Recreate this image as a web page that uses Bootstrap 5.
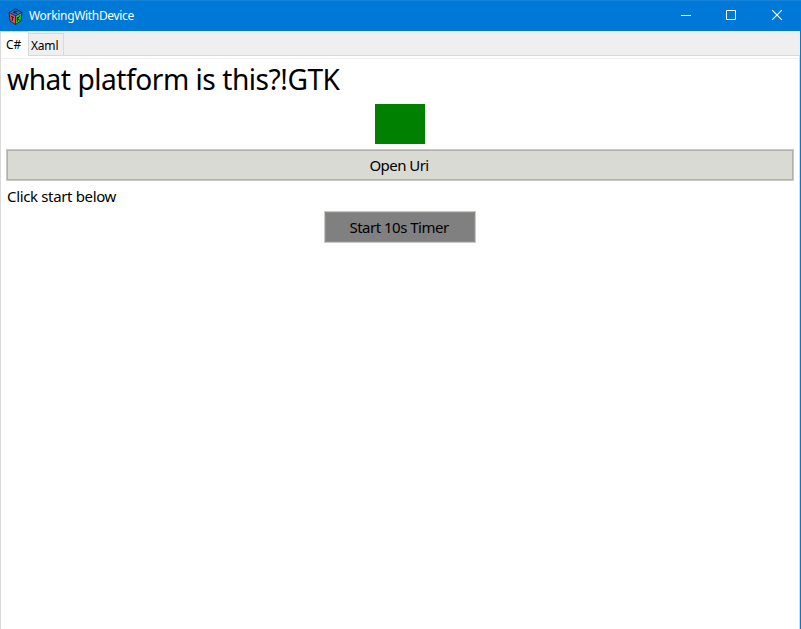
<!DOCTYPE html>
<html lang="en">
<head>
<meta charset="utf-8">
<title>WorkingWithDevice</title>
<meta name="viewport" content="width=device-width, initial-scale=1">
<link href="https://cdn.jsdelivr.net/npm/bootstrap@5.3.0/dist/css/bootstrap.min.css" rel="stylesheet">
<style>
body{font-family:"Segoe UI","Noto Sans","Open Sans",sans-serif;color:#000;line-height:1;font-size:15px}
.win{height:100vh;border-right:1px solid #0078d7}
.titlebar{height:31px;background:#0078d7;border-top:1px solid #1683da;margin-right:-1px;padding-left:8px;font-size:12px}
.app-name{margin-left:6px;letter-spacing:-.32px}
.ctl{width:46px;height:30px}
.client{border:solid #d9d9d9;border-width:0 1px;min-height:0}
.tabs{height:25px;background:#efefef;border-bottom:1px solid #d9d9d9;margin:0 -1px;font-size:12px}
.tabs .nav-link{color:#000;border:1px solid #d9d9d9;border-radius:0;padding:0;line-height:23px}
.tabs .nav-link.active{width:28px;height:25px;background:#fff;border-bottom:0;border-right:0;padding-left:5px;line-height:26px}
.tabs .tab-idle{width:36px;height:23px;margin-top:2px;padding-left:2px;letter-spacing:-.2px}
.rule{height:1px;background:#efefef;margin:2px 1px 0}
.page{padding:0 5px 0 5px}
.headline{font-size:29.5px;line-height:40px;height:45px;margin:0;padding:0 0 0 1px;font-weight:400;letter-spacing:-.5px}
.headline span{display:inline-block;transform:scaleX(.954);transform-origin:0 0}
.swatch{width:50px;height:40px;background:green;margin-bottom:5px}
.gtk{border:1px solid #c8c8c4;border-radius:0;height:32px;padding:0 2px 0 0;font-size:15px;color:#000;background:#dadad5;box-shadow:inset 0 0 0 1px #b1b2ac;line-height:31px;letter-spacing:-.55px}
.gtk:hover{background:#dadad5;color:#000;border-color:#c8c8c4}
.timer,.timer:hover{width:152px;background:#808080;box-shadow:inset 0 0 0 1px #8e8e8a;letter-spacing:-.5px}
.status{line-height:30px;height:30px;padding-left:1px;letter-spacing:-.35px}
</style>
<script src="https://cdn.jsdelivr.net/npm/bootstrap@5.3.0/dist/js/bootstrap.bundle.min.js"></script>
</head>
<body class="overflow-hidden">
<div class="win d-flex flex-column bg-white">
  <header class="titlebar d-flex align-items-center text-white flex-shrink-0">
    <svg width="15" height="17" viewBox="0 0 15 17">
      <path d="M1 4.5 7.5 7.8V16.5L2 13z" fill="#f04856"/>
      <path d="M14 4.5 7.5 7.8V16.5L13 13z" fill="#2cc044"/>
      <path d="M1 4.5 7.5 .8 14 4.5 7.5 7.8z" fill="#316bc8"/>
      <path d="M1 4.5 7.5 7.8 14 4.5M7.5 7.8V16.5M1 4.5 7.5 .8 14 4.5 13 13 7.5 16.5 2 13z" fill="none" stroke="#17202c" stroke-width=".8"/>
      <path d="M9.5 3.4Q7 2.4 5.5 4.4L9 5.4M2.7 8 6 9.6M4.3 9V13M9.4 9V13.6M12 7.5 9.7 10.7 11.8 12.5" fill="none" stroke="#111" stroke-width=".9"/>
    </svg>
    <span class="app-name">WorkingWithDevice</span>
    <div class="d-flex ms-auto">
      <svg class="ctl" viewBox="0 0 46 30"><path d="M18 14.5h10" stroke="#fff"/></svg>
      <svg class="ctl" viewBox="0 0 46 30"><path d="M17.5 9.5h9v9h-9z" fill="none" stroke="#fff"/></svg>
      <svg class="ctl" viewBox="0 0 46 30"><path d="M17.2 9.2l9.6 9.6M26.8 9.2l-9.6 9.6" stroke="#fff" stroke-width="1.1"/></svg>
    </div>
  </header>
  <main class="client flex-grow-1">
    <nav class="tabs nav">
      <a class="nav-link active">C#</a>
      <a class="nav-link tab-idle">Xaml</a>
    </nav>
    <div class="rule"></div>
    <section class="page d-flex flex-column">
      <h1 class="headline text-nowrap"><span>what platform is this?!GTK</span></h1>
      <div class="swatch align-self-center"></div>
      <button class="btn gtk w-100" type="button">Open Uri</button>
      <div class="status">Click start below</div>
      <button class="btn gtk timer align-self-center" type="button">Start 10s Timer</button>
    </section>
  </main>
</div>
</body>
</html>
